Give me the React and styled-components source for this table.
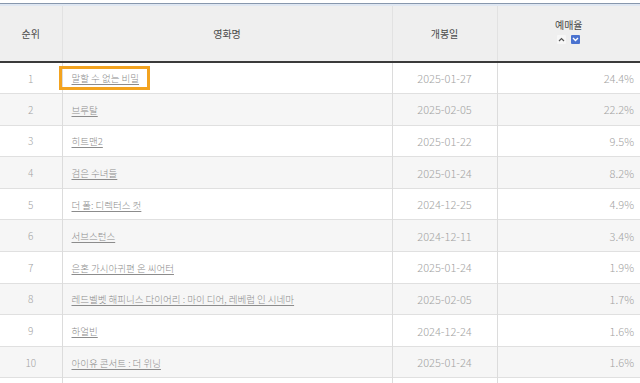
import React from "react";
import styled, { createGlobalStyle } from "styled-components";

const GlobalStyle = createGlobalStyle`
  html, body {
    margin: 0;
    padding: 0;
    background: #ffffff;
    overflow: hidden;
  }
  body {
    font-family: "Noto Sans CJK KR", "Noto Sans", sans-serif;
  }
`;

const movies = [
  { rank: 1, title: "말할 수 없는 비밀", date: "2025-01-27", rate: "24.4%" },
  { rank: 2, title: "브루탈", date: "2025-02-05", rate: "22.2%" },
  { rank: 3, title: "히트맨2", date: "2025-01-22", rate: "9.5%" },
  { rank: 4, title: "검은 수녀들", date: "2025-01-24", rate: "8.2%" },
  { rank: 5, title: "더 폴: 디렉터스 컷", date: "2024-12-25", rate: "4.9%" },
  { rank: 6, title: "서브스턴스", date: "2024-12-11", rate: "3.4%" },
  { rank: 7, title: "은혼 가시아귀편 온 씨어터", date: "2025-01-24", rate: "1.9%" },
  { rank: 8, title: "레드벨벳 해피니스 다이어리 : 마이 디어, 레베럽 인 시네마", date: "2025-02-05", rate: "1.7%" },
  { rank: 9, title: "하얼빈", date: "2024-12-24", rate: "1.6%" },
  { rank: 10, title: "아이유 콘서트 : 더 위닝", date: "2025-01-24", rate: "1.6%" },
];

const App = () => {
  return (
    <>
      <GlobalStyle />
      <Page>
        <TopRule />
        <Table>
          <colgroup>
            <col style={{ width: 62 }} />
            <col style={{ width: 330 }} />
            <col style={{ width: 105 }} />
            <col />
          </colgroup>
          <thead>
            <tr>
              <Th>순위</Th>
              <Th>영화명</Th>
              <Th>개봉일</Th>
              <Th>
                <HeadLabel>예매율</HeadLabel>
                <SortGroup>
                  <SortButton>
                    <svg width="7" height="5" viewBox="0 0 7 5">
                      <path d="M1 4 L3.5 1.5 L6 4" fill="none" stroke="#555" strokeWidth="1.2" />
                    </svg>
                  </SortButton>
                  <SortButton $active>
                    <svg width="7" height="5" viewBox="0 0 7 5">
                      <path d="M1 1 L3.5 3.5 L6 1" fill="none" stroke="#fff" strokeWidth="1.4" />
                    </svg>
                  </SortButton>
                </SortGroup>
              </Th>
            </tr>
          </thead>
          <tbody>
            {movies.map((m, idx) => (
              <Row key={m.rank} $even={idx % 2 === 1}>
                <RankCell>{m.rank}</RankCell>
                <TitleCell>
                  <TitleLink $highlight={idx === 0}>{m.title}</TitleLink>
                </TitleCell>
                <DateCell>{m.date}</DateCell>
                <RateCell>{m.rate}</RateCell>
              </Row>
            ))}
            <Row>
              <RankCell />
              <TitleCell />
              <DateCell />
              <RateCell />
            </Row>
          </tbody>
        </Table>
      </Page>
    </>
  );
};

const Page = styled.div`
  width: 640px;
  padding-top: 3px;
`;

const TopRule = styled.div`
  height: 1px;
  border-top: 1px solid #8797ad;
  background: #dfe7f2;
  padding-bottom: 1px;
`;

const Table = styled.table`
  width: 640px;
  border-collapse: collapse;
  table-layout: fixed;
`;

const Th = styled.th`
  height: 55px;
  padding: 0;
  background: #efefef;
  border-left: 1px solid #e2e2e2;
  border-bottom: 2px solid #3a3a3a;
  font-size: 10px;
  font-weight: 400;
  color: #4a4a4a;
  text-align: center;
  vertical-align: middle;

  &:first-child {
    border-left: none;
  }
`;

const HeadLabel = styled.div`
  line-height: 14px;
  margin-top: -6px;
`;

const SortGroup = styled.div`
  display: flex;
  justify-content: center;
  gap: 5px;
  margin-top: 3px;
`;

const SortButton = styled.span`
  width: 9px;
  height: 9px;
  display: flex;
  align-items: center;
  justify-content: center;
  background: ${(p) => (p.$active ? "#4a72cf" : "#f7f7f7")};
  border-radius: 1px;
`;

const Row = styled.tr`
  height: 31.6px;
  background: ${(p) => (p.$even ? "#f6f6f6" : "#ffffff")};
`;

const Td = styled.td`
  padding: 0;
  border-top: 1px solid #e0e0e0;
  border-left: 1px solid #dcdcdc;
  font-size: 10px;
  font-weight: 300;
  color: #a3a3a3;
  vertical-align: middle;

  &:first-child {
    border-left: none;
  }
`;

const RankCell = styled(Td)`
  text-align: center;
`;

const TitleCell = styled(Td)`
  padding-left: 9px;
  text-align: left;
`;

const TitleLink = styled.span`
  display: inline-block;
  font-size: 9.5px;
  color: #8c8c8c;
  text-decoration: underline;
  text-underline-offset: 2px;
  white-space: nowrap;
  ${(p) =>
    p.$highlight &&
    `
    position: relative;
    top: -1px;
    outline: 3px solid #f3a31f;
    padding: 2px 8px 2px 10px;
    margin: -2px -8px -2px -10px;
  `}
`;

const DateCell = styled(Td)`
  text-align: center;
  font-size: 11px;
`;

const RateCell = styled(Td)`
  text-align: right;
  padding-right: 6px;
  font-size: 11px;
`;

export default App;
